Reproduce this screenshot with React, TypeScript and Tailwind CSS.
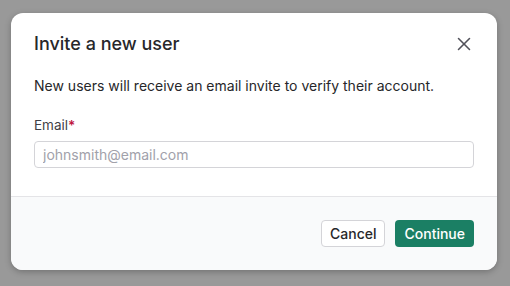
import { X } from "lucide-react";

export default function App() {
  return (
    <div
      className="w-[510px] h-[286px] bg-[#999999] pt-[13px] pl-[11px]"
      style={{ fontFamily: "Inter, 'Noto Sans', sans-serif" }}
    >
      <div className="w-[486px] h-[257px] rounded-[12px] bg-white overflow-hidden flex flex-col shadow-[0_2px_6px_rgba(0,0,0,0.25)]">
        {/* Body */}
        <div className="px-[23px] pt-[19px] pb-[28px] border-b border-[#e4e4e7]">
          <div className="flex items-center justify-between">
            <h2 className="text-[18px] leading-[24px] font-medium text-[#27272a]">Invite a new user</h2>
            <button className="text-[#52525b] -mr-[1px]">
              <X size={22} strokeWidth={1.7} />
            </button>
          </div>
          <p className="mt-[20px] text-[14px] leading-[20px] text-[#27272a]">
            New users will receive an email invite to verify their account.
          </p>
          <label className="block mt-[19px] text-[13.5px] leading-[20px] text-[#3f3f46]">
            Email<span className="text-[#be123c] font-semibold">*</span>
          </label>
          <input
            type="email"
            placeholder="johnsmith@email.com"
            className="mt-[6px] w-full h-[27px] rounded-[4px] border border-[#d4d4d8] px-[8px] text-[14px] text-[#27272a] placeholder:text-[#a1a1aa] outline-none"
          />
        </div>

        {/* Footer */}
        <div className="flex-1 bg-[#f9fafb] px-[23px] flex items-center justify-end gap-[10px]">
          <button className="h-[27px] px-[8px] rounded-[4px] border border-[#d4d4d8] bg-white text-[14px] font-medium text-[#27272a]">
            Cancel
          </button>
          <button className="h-[27px] px-[9px] rounded-[4px] bg-[#1b7f64] text-[14px] font-medium text-white">
            Continue
          </button>
        </div>
      </div>
    </div>
  );
}
